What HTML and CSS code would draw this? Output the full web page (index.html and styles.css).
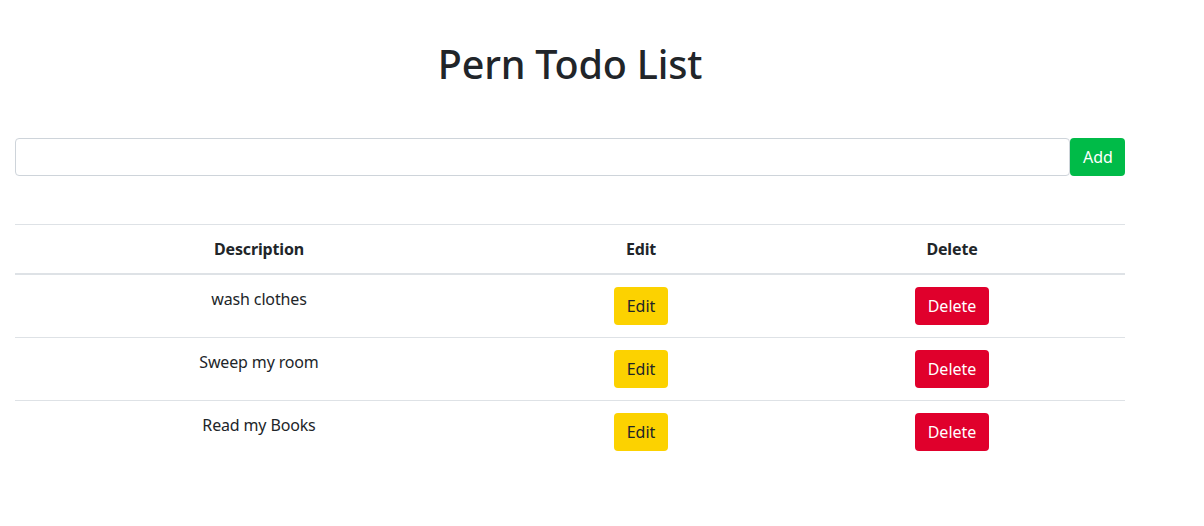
FILE: index.html
```html
<!DOCTYPE html>
<html lang="en">
<head>
<meta charset="utf-8">
<title>Pern Todo List</title>
<link rel="stylesheet" href="styles.css">
</head>
<body>
<div class="container">
  <h1 class="title">Pern Todo List</h1>
  <form class="add-form">
    <input type="text" class="form-control">
    <button type="button" class="btn btn-success">Add</button>
  </form>
  <table class="table">
    <colgroup>
      <col class="col-desc">
      <col class="col-edit">
      <col class="col-del">
    </colgroup>
    <thead>
      <tr><th>Description</th><th>Edit</th><th>Delete</th></tr>
    </thead>
    <tbody>
      <tr>
        <td>wash clothes</td>
        <td><button type="button" class="btn btn-warning">Edit</button></td>
        <td><button type="button" class="btn btn-danger">Delete</button></td>
      </tr>
      <tr>
        <td>Sweep my room</td>
        <td><button type="button" class="btn btn-warning">Edit</button></td>
        <td><button type="button" class="btn btn-danger">Delete</button></td>
      </tr>
      <tr>
        <td>Read my Books</td>
        <td><button type="button" class="btn btn-warning">Edit</button></td>
        <td><button type="button" class="btn btn-danger">Delete</button></td>
      </tr>
    </tbody>
  </table>
</div>
</body>
</html>
```
FILE: styles.css
```css
* { box-sizing: border-box; }
body {
  margin: 0;
  font-family: "Noto Sans", "Open Sans", sans-serif;
  font-size: 16px;
  line-height: 1.5;
  color: #212529;
  background: #fff;
  letter-spacing: -0.15px;
}
.container {
  width: 1140px;
  padding: 0 15px;
}
.title {
  margin: 40px 0 0;
  font-size: 39.5px;
  font-weight: 500;
  line-height: 48px;
  text-align: center;
  letter-spacing: -0.2px;
}
.add-form {
  display: flex;
  margin-top: 50px;
}
.form-control {
  flex: 1;
  height: 38px;
  padding: 6px 12px;
  font: inherit;
  border: 1px solid #ced4da;
  border-radius: 4px;
  background: #fff;
}
.btn {
  display: inline-block;
  height: 38px;
  padding: 6px 12px;
  font: inherit;
  line-height: 24px;
  border: 1px solid transparent;
  border-radius: 4px;
  cursor: pointer;
}
.btn-success { background: #00bb48; color: #fff; width: 55px; }
.btn-warning { background: #fcd200; color: #212529; }
.btn-danger { background: #e0002c; color: #fff; }
.table {
  width: 1110px;
  margin-top: 48px;
  border-collapse: collapse;
  table-layout: fixed;
}
.col-desc { width: 488px; }
.col-edit { width: 276px; }
.col-del { width: 346px; }
.table th, .table td {
  padding: 12px;
  text-align: center;
  vertical-align: top;
  border-top: 1px solid #dee2e6;
}
.table th {
  font-weight: 700;
  border-bottom: 2px solid #dee2e6;
}
```
